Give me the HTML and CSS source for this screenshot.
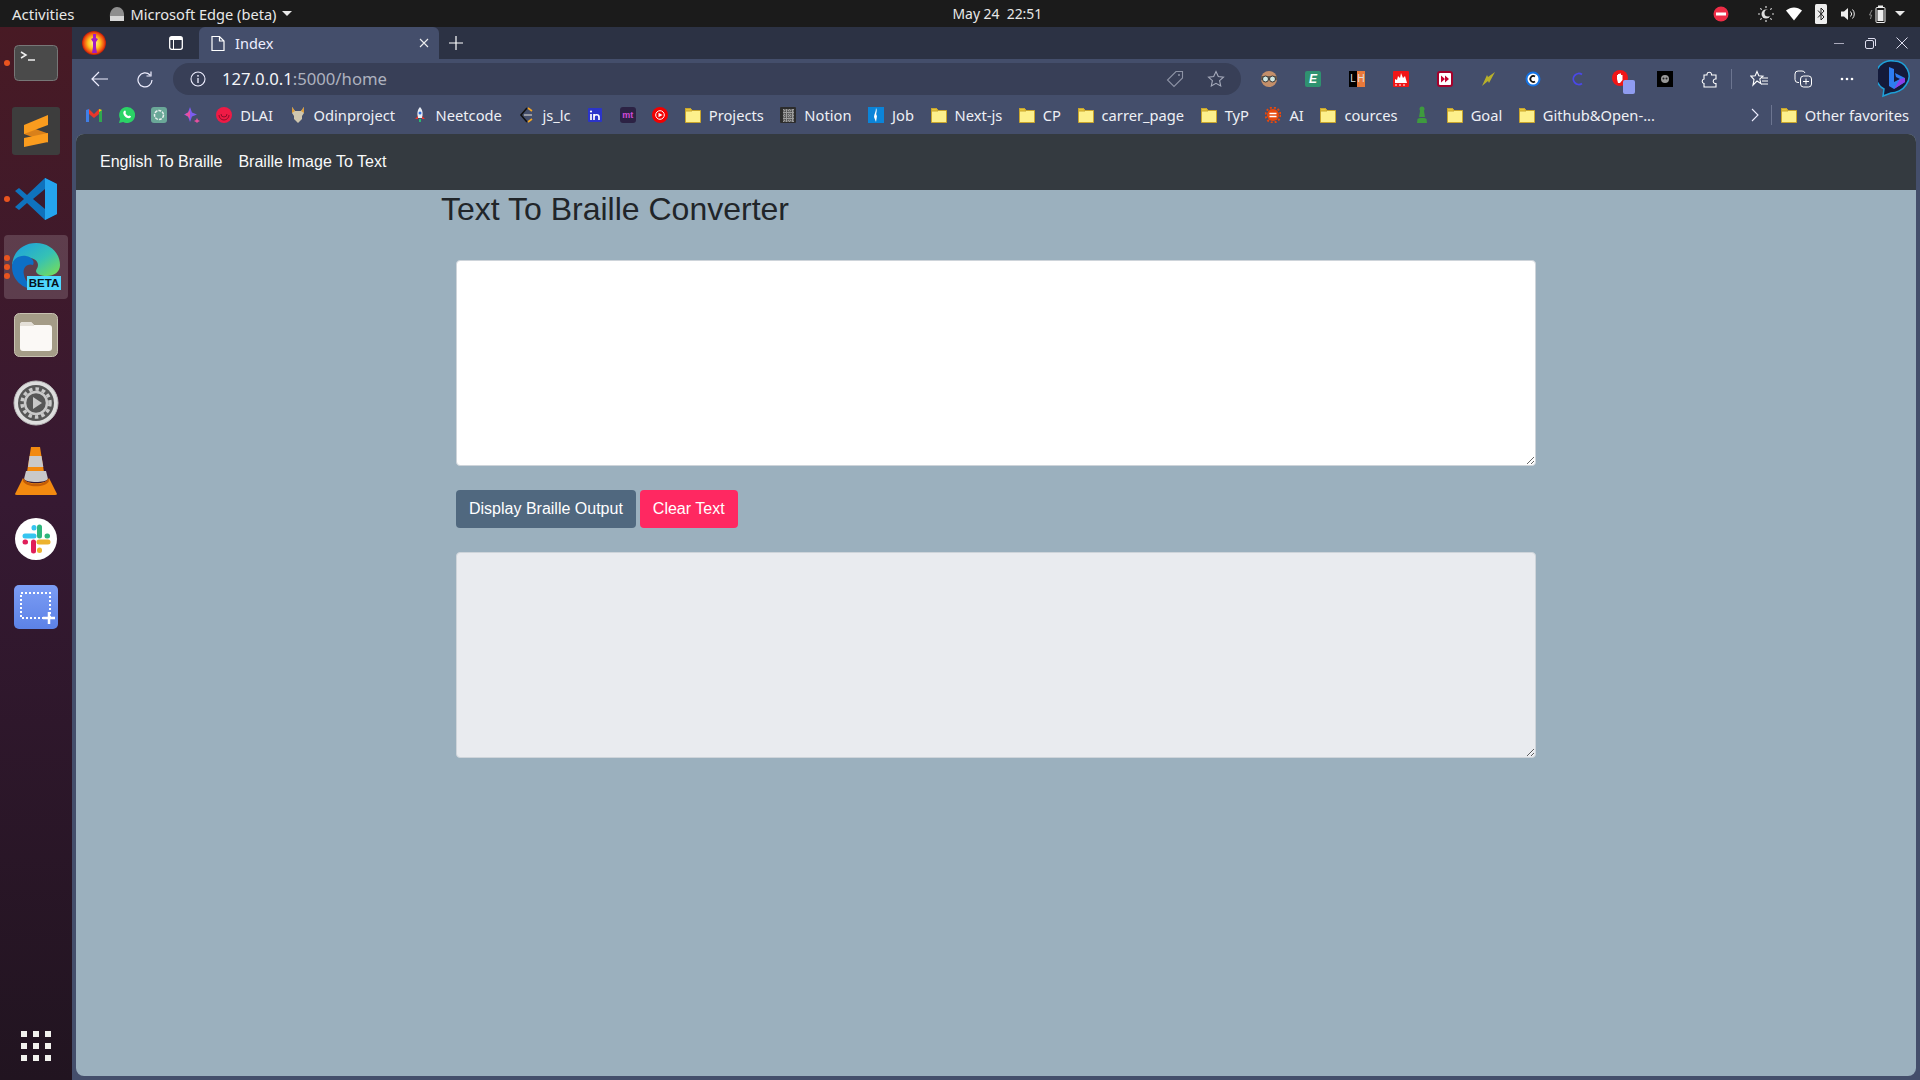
FILE: index.html
```html
<!DOCTYPE html>
<html lang="en">
  <head>
    <meta charset="utf-8" />
    <title>Index</title>
    <link rel="stylesheet" href="styles.css">
  </head>
  <body>
    <svg class="defs" width="0" height="0">
      <defs>
        <symbol id="folder" viewBox="0 0 16 16">
          <path d="M.5 1.5h5l2 2h8v12H.5z" fill="#fdf08c" stroke="#c9a52c"/>
          <path d="M.5 1.5h5l1.500 2.500H.5z" fill="#e7c63a" stroke="#c9a52c"/>
        </symbol>
        <linearGradient id="edge-top" x1="0" y1="0" x2="1" y2="1">
          <stop offset="0" stop-color="#1b9de2"/>
          <stop offset=".55" stop-color="#35c1b5"/>
          <stop offset="1" stop-color="#7ee04e"/>
        </linearGradient>
        <linearGradient id="dock-shot" x1="0" y1="0" x2="0" y2="1">
          <stop offset="0" stop-color="#7c9df5"/>
          <stop offset="1" stop-color="#5c82e6"/>
        </linearGradient>
        <radialGradient id="profile-glow">
          <stop offset="0" stop-color="#fff3a0"/>
          <stop offset=".5" stop-color="#ffc21f"/>
          <stop offset=".85" stop-color="#ee4a10"/>
          <stop offset="1" stop-color="#b81808"/>
        </radialGradient>
      </defs>
    </svg>

    <header class="topbar">
      <span class="activities">Activities</span>
      <span class="app-menu">
        <svg width="16" height="16" viewBox="0 0 16 16"><path d="M1 12C0 5 4 1 8 1s7 3 7 8v3z" fill="#8e8e8e"/><rect x="1" y="10" width="14" height="5" fill="#d6d6d6"/></svg>
        Microsoft Edge (beta)
        <i class="caret"></i>
      </span>
      <span class="clock">May 24&nbsp; 22:51</span>
      <span class="tray">
        <svg class="tray-red" width="16" height="16" viewBox="0 0 16 16"><circle cx="8" cy="8" r="7.500" fill="#ee2c46"/><rect x="3" y="6.500" width="10" height="3" fill="#fff"/></svg>
        <svg class="tray-sun" width="18" height="18" viewBox="0 0 18 18"><circle cx="9" cy="9" r="4.500" fill="#ddd"/><circle cx="11" cy="8" r="3.500" fill="#1b1b1b"/><path d="M9 1v2M9 15v2M1 9h2M15 9h2M3.300 3.300l1.400 1.400M13.300 13.300l1.400 1.400M3.300 14.700l1.400-1.400M13.300 4.700l1.400-1.400" stroke="#ddd" stroke-width="1.200"/></svg>
        <svg width="18" height="14" viewBox="0 0 18 14"><path d="M1 3.500C6-.5 12-.5 17 3.500L9 13.500z" fill="#fff"/></svg>
        <svg class="tray-bt" width="12" height="20" viewBox="0 0 12 20"><rect width="12" height="20" rx="1.500" fill="#eee"/><path d="M3 6.500l6 6.500-3 3V4l3 3-6 6.500" fill="none" stroke="#222"/></svg>
        <svg width="16" height="14" viewBox="0 0 16 14"><path d="M0 4.500h3L7 1v12L3 9.500H0z" fill="#eee"/><path d="M9.500 4.500a3.500 3.500 0 010 5M11.500 2.500a6.500 6.500 0 010 9" stroke="#eee" fill="none"/></svg>
        <svg class="tray-bat" width="20" height="18" viewBox="0 0 20 18"><path d="M3 5L0.500 10h2L1.500 14" stroke="#888" fill="none"/><rect x="7" y="2.500" width="9" height="15" rx="1" fill="none" stroke="#eee"/><rect x="9" y="0.500" width="5" height="2" fill="#eee"/><rect x="8.500" y="5" width="6" height="11" fill="#eee"/></svg>
        <i class="caret"></i>
      </span>
    </header>

    <div class="desktop">
      <nav class="dock">
        <div class="dock-item">
          <i class="run-dot"></i>
          <svg width="44" height="36" viewBox="0 0 44 36"><rect x=".5" y=".5" width="43" height="35" rx="4" fill="#4a4a4a" stroke="#777"/><path d="M7 7l5 3-5 3M14 15h7" fill="none" stroke="#eee" stroke-width="1.500"/></svg>
        </div>
        <div class="dock-item">
          <svg width="48" height="48" viewBox="0 0 48 48"><rect width="48" height="48" rx="3" fill="#3d3d3d"/><path d="M12 18l24 8.500v9L12 27z" fill="#d9801a"/><path d="M36 8v10L12 27v-9z" fill="#fa9c1e"/><path d="M36 26v9L12 40v-9z" fill="#fa9c1e"/></svg>
        </div>
        <div class="dock-item">
          <i class="run-dot"></i>
          <svg width="44" height="44" viewBox="0 0 44 44"><path d="M31 1l12 6v30l-12 6L13 26 5 33l-4-3 9-8-9-8 4-3 8 7z" fill="#0f72bd"/><path d="M31 1l12 6v30l-12 6z" fill="#25a4ee"/><path d="M31 12L19 22l12 10z" fill="#3b1a2e"/></svg>
        </div>
        <div class="dock-item dock-active">
          <i class="run-dot dot-a"></i><i class="run-dot"></i><i class="run-dot dot-c"></i>
          <svg width="50" height="50" viewBox="0 0 50 50">
            <path d="M1 25C1 10 12 1 25 1c14 0 24 10 24 22 0 7-6 11-13 11-6 0-11-2-11-5 0-2 2-3 2-6 0-5-6-8-12-7C8 17 1 19 1 25z" fill="url(#edge-top)"/>
            <path d="M1 25c0-9 8-12 14-11 6 1 9 5 7 9-5-2-11 2-9 10 1 6 6 10 12 12 3 1 4 2 6 2C14 50 1 39 1 25z" fill="#0d6fc6"/>
            <rect x="16" y="34" width="34" height="14" fill="#4fd8ff"/>
            <text x="33" y="45" class="beta">BETA</text>
          </svg>
        </div>
        <div class="dock-item">
          <svg width="44" height="44" viewBox="0 0 44 44"><rect x=".5" y=".5" width="43" height="43" rx="5" fill="#a49c87" stroke="#c8c2b2"/><path d="M6 12a3 3 0 013-3h8l3 3h15a3 3 0 013 3v20a3 3 0 01-3 3H9a3 3 0 01-3-3z" fill="#fbf9f6"/><path d="M6 12a3 3 0 013-3h8l3 3v1H6z" fill="#e4e0d8"/></svg>
        </div>
        <div class="dock-item">
          <svg width="46" height="46" viewBox="0 0 46 46"><circle cx="23" cy="23" r="22" fill="#dedede" stroke="#bbb"/><circle cx="23" cy="23" r="18" fill="#575757"/><circle cx="23" cy="23" r="14" fill="none" stroke="#c9c9c9" stroke-width="3.500" stroke-dasharray="3.500 3"/><circle cx="23" cy="23" r="11" fill="none" stroke="#c9c9c9" stroke-width="2.500"/><path d="M20 17l9 6-9 6z" fill="#c9c9c9"/></svg>
        </div>
        <div class="dock-item">
          <svg width="42" height="48" viewBox="0 0 42 48"><path d="M16 0h9l4 25H12z" fill="#f28a10"/><path d="M14.500 9h12l1.800 11H13z" fill="#c9c9c9"/><path d="M11 24h20l2 8c-2 4-22 4-24 0z" fill="#c9c9c9"/><path d="M8 31l-8 16q0 1 2 1h38q2 0 2-1l-8-16c-2 7-24 7-26 0z" fill="#f28a10"/><path d="M9 31c2 8 22 8 24 0l1 3c-3 7-23 7-26 0z" fill="#c25c06"/></svg>
        </div>
        <div class="dock-item">
          <svg width="42" height="42" viewBox="0 0 42 42"><circle cx="21" cy="21" r="21" fill="#fff"/><g fill="none" stroke-linecap="round" stroke-width="5"><path d="M10 18h9" stroke="#36c5f0"/><path d="M19 9.500v.5" stroke="#36c5f0"/><path d="M24.500 9v9" stroke="#2eb67d"/><path d="M32 18h.500" stroke="#2eb67d"/><path d="M24 24h9" stroke="#ecb22e"/><path d="M24.500 32v.500" stroke="#ecb22e"/><path d="M18.500 24v9" stroke="#e01e5a"/><path d="M10 24h.500" stroke="#e01e5a"/></g></svg>
        </div>
        <div class="dock-item">
          <svg width="44" height="44" viewBox="0 0 44 44"><rect width="44" height="44" rx="5" fill="url(#dock-shot)"/><rect x="7" y="8" width="29" height="25" fill="none" stroke="#fff" stroke-width="2" stroke-dasharray="2 2"/><path d="M35 27v12M29 33h12" stroke="#fff" stroke-width="2.500"/></svg>
        </div>
        <div class="dock-apps">
          <svg width="30" height="30" viewBox="0 0 30 30" fill="#f2f2ee"><rect width="6" height="6"/><rect x="12" width="6" height="6"/><rect x="24" width="6" height="6"/><rect y="12" width="6" height="6"/><rect x="12" y="12" width="6" height="6"/><rect x="24" y="12" width="6" height="6"/><rect y="24" width="6" height="6"/><rect x="12" y="24" width="6" height="6"/><rect x="24" y="24" width="6" height="6"/></svg>
        </div>
      </nav>

      <div class="browser">
        <div class="tabstrip">
          <span class="profile">
            <svg width="24" height="24" viewBox="0 0 24 24"><circle cx="12" cy="12" r="12" fill="url(#profile-glow)"/><path d="M11 3h3v4l2 1-2 3v5l1 6h-5l1-6v-5L9 8l2-1z" fill="#a11bc4"/></svg>
          </span>
          <span class="tab-actions">
            <svg width="14" height="14" viewBox="0 0 14 14"><rect x=".7" y=".7" width="12.600" height="12.600" rx="2" fill="none" stroke="#fff" stroke-width="1.300"/><rect x="1" y="1" width="12" height="3" fill="#fff"/><path d="M4.500 4v9" stroke="#fff"/></svg>
          </span>
          <div class="tab">
            <svg width="14" height="17" viewBox="0 0 14 17"><path d="M1 1.500h7.500l4.500 4.500v9.500H1zM8.500 1.500V6H13" fill="none" stroke="#fff" stroke-width="1.200"/></svg>
            <span class="tab-title">Index</span>
            <svg class="tab-close" width="10" height="10" viewBox="0 0 10 10"><path d="M1 1l8 8M9 1l-8 8" stroke="#eee" stroke-width="1.100"/></svg>
          </div>
          <span class="new-tab">
            <svg width="14" height="14" viewBox="0 0 14 14"><path d="M7 0v14M0 7h14" stroke="#fff" stroke-width="1.200"/></svg>
          </span>
          <span class="win-controls">
            <svg width="11" height="11" viewBox="0 0 11 11"><path d="M0 5.500h10" stroke="#aab"/></svg>
            <svg width="11" height="11" viewBox="0 0 11 11"><rect x=".5" y="2.500" width="8" height="8" rx="1.500" fill="none" stroke="#dde"/><path d="M3 .5h6a1.500 1.500 0 011.500 1.500v6" fill="none" stroke="#dde"/></svg>
            <svg width="12" height="12" viewBox="0 0 12 12"><path d="M.5.500l11 11M11.500.500l-11 11" stroke="#dde"/></svg>
          </span>
        </div>

        <div class="toolbar">
          <span class="tool">
            <svg width="18" height="16" viewBox="0 0 18 16"><path d="M17 8H1M8 1L1 8l7 7" fill="none" stroke="#eef" stroke-width="1.200"/></svg>
          </span>
          <span class="tool">
            <svg width="17" height="17" viewBox="0 0 17 17"><path d="M14 4a7 7 0 10 2 5M15 .5V5h-4.500" fill="none" stroke="#eef" stroke-width="1.200"/></svg>
          </span>
          <div class="addressbar">
            <svg width="16" height="16" viewBox="0 0 16 16"><circle cx="8" cy="8" r="7" fill="none" stroke="#eef" stroke-width="1.100"/><path d="M8 7v5" stroke="#eef" stroke-width="1.300"/><circle cx="8" cy="4.800" r=".9" fill="#eef"/></svg>
            <span class="url"><b>127.0.0.1</b>:5000/home</span>
            <span class="addr-icons">
              <svg width="18" height="18" viewBox="0 0 18 18"><path d="M10 1.500h6.500V8L8 16.500 1.500 10z" fill="none" stroke="#8d93a5" stroke-width="1.100"/><circle cx="13" cy="5" r="1" fill="#8d93a5"/></svg>
              <svg width="18" height="18" viewBox="0 0 18 18"><path d="M9 1.500l2.300 5 5.200.6-3.900 3.500 1.100 5.400L9 13.300 4.300 16l1.100-5.400L1.500 7.100l5.200-.6z" fill="none" stroke="#a5aabb" stroke-width="1.100"/></svg>
            </span>
          </div>
          <span class="ext-group">
            <span class="tool">
              <svg width="16" height="18" viewBox="0 0 16 18"><circle cx="8" cy="9" r="8" fill="#c48f6a"/><rect y="6" width="16" height="4" fill="#6b5a4a"/><circle cx="4.500" cy="9" r="3" fill="#cfe8e4" stroke="#333"/><circle cx="11.500" cy="9" r="3" fill="#cfe8e4" stroke="#333"/></svg>
            </span>
            <span class="tool"><span class="ext-e">E</span></span>
            <span class="tool"><span class="ext-lh"><i>L</i><i>H</i></span></span>
            <span class="tool">
              <svg width="16" height="16" viewBox="0 0 16 16"><rect width="16" height="16" rx="1" fill="#f01616"/><path d="M2 12V8l2 1 1-4 2 2 1-5 2 5 2-2 2 7z" fill="#fff"/><path d="M2 14h2M6 14h2M10 14h2" stroke="#fff"/></svg>
            </span>
            <span class="tool">
              <svg width="16" height="16" viewBox="0 0 16 16"><rect width="16" height="16" rx="3" fill="#a5002b"/><rect x="2" y="2" width="12" height="12" rx="1" fill="#fff"/><path d="M4 4.500L8 8l-4 3.500zM8 4.500L12 8l-4 3.500z" fill="#c4002f"/></svg>
            </span>
            <span class="tool">
              <svg width="16" height="16" viewBox="0 0 16 16"><path d="M14 1L7 6 6 4 1 15l6-5 1 2z" fill="#b8b02a"/></svg>
            </span>
            <span class="tool">
              <svg width="16" height="16" viewBox="0 0 16 16"><circle cx="8" cy="8" r="7.500" fill="#1273e6"/><circle cx="8" cy="8" r="5.500" fill="#fff"/><path d="M10 5.500a3 3 0 100 5" fill="none" stroke="#111" stroke-width="1.800"/></svg>
            </span>
            <span class="tool">
              <svg width="12" height="16" viewBox="0 0 12 16"><path d="M11 3.500a5.500 5.500 0 100 9" fill="none" stroke="#4a48e8" stroke-width="1.800"/></svg>
            </span>
            <span class="tool ext-block">
              <svg width="18" height="18" viewBox="0 0 18 18"><circle cx="8" cy="8" r="8" fill="#f01616"/><path d="M5 9V5h1v3-4h1.500v4-4.500H9V8 5h1.500v5L8 13H6z" fill="#fff"/></svg>
              <i class="ext-badge"></i>
            </span>
            <span class="tool">
              <svg width="16" height="16" viewBox="0 0 16 16"><rect width="16" height="16" fill="#000"/><circle cx="8" cy="8" r="4" fill="#999"/><circle cx="6.500" cy="7.500" r="1" fill="#222"/><circle cx="9.500" cy="7.500" r="1" fill="#222"/></svg>
            </span>
            <span class="tool">
              <svg width="17" height="17" viewBox="0 0 17 17"><path d="M6 3a2.300 2.300 0 014.500 0v1H15v4h-1a2.300 2.300 0 000 4.500h1V16H3v-3.500a2.300 2.300 0 010-4.500V4h3z" fill="none" stroke="#fff" stroke-width="1.100"/></svg>
            </span>
          </span>
          <i class="tool-sep"></i>
          <span class="tool">
            <svg width="18" height="18" viewBox="0 0 18 18"><path d="M7 1.500l1.800 4.200 4.200.4-3.200 2.900 1 4.500L7 11 3 15l1-5.500L.8 6.100l4.400-.4z" fill="none" stroke="#fff" stroke-width="1.100"/><path d="M12 8h6M12 11h6M11 14h7" stroke="#fff"/></svg>
          </span>
          <span class="tool">
            <svg width="18" height="18" viewBox="0 0 18 18"><path d="M5 12.500H4a3 3 0 01-3-3V4a3 3 0 013-3h4a3 3 0 013 2" fill="none" stroke="#fff"/><rect x="6.500" y="6" width="11" height="11" rx="3" fill="none" stroke="#fff"/><path d="M12 8.500v6M9 11.500h6" stroke="#fff"/></svg>
          </span>
          <span class="tool">
            <svg width="14" height="4" viewBox="0 0 14 4" fill="#fff"><circle cx="2" cy="2" r="1.300"/><circle cx="7" cy="2" r="1.300"/><circle cx="12" cy="2" r="1.300"/></svg>
          </span>
          <span class="bing">
            <svg width="32" height="38" viewBox="0 0 32 38"><path d="M16 1a15 15 0 0112 24c-3 5-10 8-15 8l-8 3 1-7A15 15 0 0116 1z" fill="#141a3a" stroke="#1ea0d8" stroke-width="1.500"/><path d="M11 7l5 2v13l6-3-4-2-1-4 10 5v4l-11 7-5-3z" fill="#2d7cf0"/><path d="M22 19l5-1v4l-11 7z" fill="#8b3fe8"/></svg>
          </span>
        </div>

        <div class="bookmarks">
          <span class="bm icon-only">
            <svg width="16" height="14" viewBox="0 0 16 14"><path d="M0 14V2l3-1v13z" fill="#3f7ee8"/><path d="M13 14V1l3 1v12z" fill="#2fa84f"/><path d="M3 1l5 5 5-5v5L8 10 3 6z" fill="#e8372c"/><path d="M13 1l3 1-3 2z" fill="#f5bb12"/></svg>
          </span>
          <span class="bm icon-only">
            <svg width="16" height="16" viewBox="0 0 16 16"><path d="M8 0a8 8 0 11-3.800 15L0 16l1.100-4.100A8 8 0 018 0z" fill="#2bd366"/><path d="M5 4c1-1 1.500-.5 2 1l-.5 1c.5 1.300 1.500 2.200 3 3l1-.6c1.500.5 2 1 1 2-1.500 1.500-4 .5-5.500-1S3.500 5.500 5 4z" fill="#fff"/></svg>
          </span>
          <span class="bm icon-only">
            <svg width="16" height="16" viewBox="0 0 16 16"><rect width="16" height="16" rx="3" fill="#6aa898"/><circle cx="8" cy="8" r="4.500" fill="none" stroke="#e8f0ee" stroke-width="1.500" stroke-dasharray="3 1"/></svg>
          </span>
          <span class="bm icon-only">
            <svg width="16" height="16" viewBox="0 0 16 16"><path d="M6 0l2 5.500L13 7.500 8 9.500 6 15 4 9.500 0 7.500l4-2z" fill="#7c5cf0"/><path d="M6 3v9l-2-2.500L1 7.500l3-2z" fill="#e84fa0"/><path d="M13 11l1 2 2 1-2 1-1 1-1-1-2-1 2-1z" fill="#e84fa0"/></svg>
          </span>
          <span class="bm">
            <svg width="16" height="16" viewBox="0 0 16 16"><circle cx="8" cy="8" r="8" fill="#ef1a45"/><path d="M3 8a5 5 0 0010 0M5 7a3 3 0 006 0" fill="none" stroke="#8f0c2a"/></svg>
            DLAI
          </span>
          <span class="bm">
            <svg width="16" height="16" viewBox="0 0 16 16"><path d="M2 0l3 4h6l3-4v6l-2 3v3l-4 4-4-4V9L2 6z" fill="#cfc6ae"/><path d="M2 0l3 4-3 2zM14 0l-3 4 3 2z" fill="#d99b3a"/></svg>
            Odinproject
          </span>
          <span class="bm">
            <svg width="16" height="16" viewBox="0 0 16 16"><path d="M8 0c3 3 3 7 2 11H6C5 7 5 3 8 0z" fill="#e9edf5"/><circle cx="8" cy="6" r="1.500" fill="#2f6fdc"/><path d="M6 9l-3 3 3 0zM10 9l3 3-3 0z" fill="#e8372c"/><path d="M7 12h2v3H7z" fill="#2bb673"/></svg>
            Neetcode
          </span>
          <span class="bm">
            <svg width="16" height="16" viewBox="0 0 16 16"><path d="M9 1L3 8l6 7" fill="none" stroke="#111" stroke-width="1.600"/><path d="M10 1l4 3M10 15l4-3" stroke="#f5a623" stroke-width="1.600"/><path d="M6 8h8" stroke="#bbb" stroke-width="1.400"/></svg>
            js_lc
          </span>
          <span class="bm icon-only">
            <svg width="14" height="14" viewBox="0 0 14 14"><rect width="14" height="14" rx="1" fill="#2b34c9"/><path d="M3 6v6M6 12V6m0 3c0-3 5-3 5 0v3" fill="none" stroke="#fff" stroke-width="1.700"/><circle cx="3" cy="3.500" r="1.100" fill="#fff"/></svg>
          </span>
          <span class="bm icon-only">
            <span class="fav-mt">mt</span>
          </span>
          <span class="bm icon-only">
            <svg width="16" height="16" viewBox="0 0 16 16"><circle cx="8" cy="8" r="8" fill="#f30000"/><circle cx="8" cy="8" r="4.300" fill="none" stroke="#fff"/><path d="M6.500 5.800L10.500 8l-4 2.200z" fill="#fff"/></svg>
          </span>
          <span class="bm"><svg class="folder" width="16" height="16"><use href="#folder"/></svg>Projects</span>
          <span class="bm">
            <svg width="16" height="16" viewBox="0 0 16 16"><rect width="16" height="16" rx="1" fill="#2c2c2c"/><path d="M3 2h11v13H3z" fill="#ccc" opacity=".7"/><path d="M3 4h11M3 7h11M3 10h11M3 13h11M5 2v13M8 2v13M11 2v13" stroke="#333" stroke-dasharray="1 1"/></svg>
            Notion
          </span>
          <span class="bm">
            <svg width="16" height="16" viewBox="0 0 16 16"><rect width="16" height="16" fill="#0b84d8"/><path d="M8 1c2 4-1 5 1 8l-1 6-2-5c0-3 2-5 2-9z" fill="#fff"/></svg>
            Job
          </span>
          <span class="bm"><svg class="folder" width="16" height="16"><use href="#folder"/></svg>Next-js</span>
          <span class="bm"><svg class="folder" width="16" height="16"><use href="#folder"/></svg>CP</span>
          <span class="bm"><svg class="folder" width="16" height="16"><use href="#folder"/></svg>carrer_page</span>
          <span class="bm"><svg class="folder" width="16" height="16"><use href="#folder"/></svg>TyP</span>
          <span class="bm">
            <svg width="16" height="16" viewBox="0 0 16 16"><circle cx="8" cy="8" r="6" fill="#e8480c"/><circle cx="8" cy="8" r="7.500" fill="none" stroke="#e8480c" stroke-width="2" stroke-dasharray="2 2"/><path d="M4.500 6.500h7M4.500 9.500h7" stroke="#fff" stroke-width="1.300"/></svg>
            AI
          </span>
          <span class="bm"><svg class="folder" width="16" height="16"><use href="#folder"/></svg>cources</span>
          <span class="bm icon-only">
            <svg width="16" height="18" viewBox="0 0 16 18"><circle cx="8" cy="3" r="2.500" fill="#3e9a3e"/><path d="M6 5h4l1 6H5zM3.500 13c0-1.500 9-1.500 9 0l.5 4H3z" fill="#3e9a3e"/></svg>
          </span>
          <span class="bm"><svg class="folder" width="16" height="16"><use href="#folder"/></svg>Goal</span>
          <span class="bm"><svg class="folder" width="16" height="16"><use href="#folder"/></svg>Github&amp;Open-...</span>
          <span class="bm-end">
            <svg width="8" height="14" viewBox="0 0 8 14"><path d="M1 1l6 6-6 6" fill="none" stroke="#eef" stroke-width="1.100"/></svg>
            <i class="bm-sep"></i>
            <span class="bm"><svg class="folder" width="16" height="16"><use href="#folder"/></svg>Other favorites</span>
          </span>
        </div>

        <main class="page">
          <div class="navbar">
            <a class="nav-link">English To Braille</a>
            <a class="nav-link">Braille Image To Text</a>
          </div>
          <div class="container">
            <h1>Text To Braille Converter</h1>
            <form class="converter">
              <textarea class="box" rows="8"></textarea>
              <div class="buttons">
                <button type="button" class="btn btn-show">Display Braille Output</button>
                <button type="button" class="btn btn-clear">Clear Text</button>
              </div>
              <textarea class="box" rows="8" disabled></textarea>
            </form>
          </div>
        </main>
      </div>
    </div>
  </body>
</html>
```

FILE: styles.css
```css
html {
  font-family: "Liberation Sans", Arial, sans-serif;
  font-size: 16px;
}

body {
  margin: 0;
  width: 1920px;
  height: 1080px;
  overflow: hidden;
  display: flex;
  flex-direction: column;
  background-color: #444e6b;
}

.defs {
  position: absolute;
}

svg {
  display: block;
  flex: none;
}

.beta {
  font-family: "Liberation Sans", sans-serif;
  font-size: 11.500px;
  font-weight: bold;
  text-anchor: middle;
  fill: #06121c;
}

/* gnome top bar */
.topbar {
  height: 27px;
  flex: none;
  display: flex;
  align-items: center;
  padding: 0 15px 0 12px;
  background-color: #1b1b1b;
  color: #e8e8e8;
  font-family: "Noto Sans", sans-serif;
  font-size: 14.600px;
}

.activities {
  margin-right: 34px;
  font-size: 15px;
}

.app-menu {
  display: flex;
  align-items: center;
  gap: 6px;
}

.caret {
  display: block;
  width: 0;
  height: 0;
  border-left: 5px solid transparent;
  border-right: 5px solid transparent;
  border-top: 5px solid #e8e8e8;
}

.app-menu .caret {
  margin-left: 0;
}

.clock {
  margin-left: 660px;
  font-size: 13.900px;
}

.tray {
  margin-left: auto;
  display: flex;
  align-items: center;
  gap: 12px;
}

.tray-red {
  margin-right: 16px;
}

.tray-sun {
  margin-right: -2px;
}

.tray-bt {
  margin-right: 2px;
}

.tray-bat {
  margin-right: -6px;
}

/* dock */
.desktop {
  flex: 1;
  display: flex;
  min-height: 0;
}

.dock {
  width: 72px;
  flex: none;
  display: flex;
  flex-direction: column;
  align-items: center;
  padding: 2px 0 19px;
  box-sizing: border-box;
  background: linear-gradient(#481a24, #361932 45%, #211420);
}

.dock-item {
  position: relative;
  width: 64px;
  height: 64px;
  margin: 2px 0;
  display: flex;
  align-items: center;
  justify-content: center;
  border-radius: 4px;
}

.dock-active {
  background-color: rgba(255, 255, 255, 0.16);
}

.run-dot {
  position: absolute;
  left: 0;
  top: 29px;
  width: 6px;
  height: 6px;
  border-radius: 50%;
  background-color: #e9541f;
}

.dot-a {
  top: 20px;
}

.dot-c {
  top: 38px;
}

.dock-apps {
  margin-top: auto;
}

/* browser chrome */
.browser {
  flex: 1;
  min-width: 0;
  display: flex;
  flex-direction: column;
}

.tabstrip {
  height: 32px;
  flex: none;
  display: flex;
  align-items: center;
  background-color: #2c3244;
}

.profile {
  width: 44px;
  display: flex;
  justify-content: center;
}

.tab-actions {
  width: 14px;
  margin-left: 53px;
  margin-right: 16px;
}

.tab {
  width: 240px;
  height: 32px;
  box-sizing: border-box;
  display: flex;
  align-items: center;
  padding: 0 10px 0 12px;
  border-radius: 6px 6px 0 0;
  background-color: #444e6b;
  color: #eef;
  font-family: "Noto Sans", sans-serif;
  font-size: 14.500px;
}

.tab-title {
  margin-left: 10px;
}

.tab-close {
  margin-left: auto;
}

.new-tab {
  margin-left: 10px;
}

.win-controls {
  margin-left: auto;
  display: flex;
  align-items: center;
  gap: 20px;
  padding-right: 12px;
}

.toolbar {
  height: 32px;
  padding: 4px 0 0 6px;
  flex: none;
  display: flex;
  align-items: center;
  background-color: #444e6b;
}

.tool {
  position: relative;
  width: 44px;
  height: 32px;
  flex: none;
  display: flex;
  align-items: center;
  justify-content: center;
}

.addressbar {
  width: 1068px;
  height: 32px;
  margin-left: 7px;
  flex: none;
  box-sizing: border-box;
  display: flex;
  align-items: center;
  padding: 0 16px 0 17px;
  border-radius: 16px;
  background-color: #383f57;
  font-family: "Noto Sans", sans-serif;
  font-size: 16.700px;
  color: #aeb2bf;
}

.url {
  margin-left: 16px;
  margin-bottom: 2px;
}

.url b {
  font-weight: 400;
  color: #f4f5f8;
}

.addr-icons {
  margin-left: auto;
  display: flex;
  gap: 23px;
}

.ext-group {
  display: flex;
  margin-left: 6px;
}

.ext-e {
  width: 16px;
  height: 16px;
  border-radius: 2px;
  background-color: #2f9270;
  color: #fff;
  font: italic bold 12px/16px "Liberation Sans", sans-serif;
  text-align: center;
}

.ext-lh {
  display: flex;
  width: 16px;
  height: 16px;
  font: 10px/16px "Liberation Sans", sans-serif;
  text-align: center;
}

.ext-lh i {
  flex: 1;
  font-style: normal;
  background-color: #000;
  color: #ddd;
}

.ext-lh i + i {
  background-color: #e9793a;
}

.ext-badge {
  position: absolute;
  left: 24px;
  top: 17px;
  width: 12px;
  height: 14px;
  border-radius: 2px;
  background-color: #8f9cf0;
}

.tool-sep {
  width: 1px;
  height: 20px;
  margin-right: 5px;
  background-color: #6c7590;
  flex: none;
}

.bing {
  margin-left: 9px;
}

.bookmarks {
  height: 39px;
  flex: none;
  display: flex;
  align-items: center;
  gap: 16.550px;
  padding-left: 14px;
  padding-right: 11px;
  font-family: "Noto Sans", sans-serif;
  font-size: 14.700px;
  color: #eef0f5;
  white-space: nowrap;
}

.bm {
  display: flex;
  align-items: center;
  gap: 8px;
}

.icon-only {
  width: 16px;
  justify-content: center;
}

.fav-mt {
  width: 16px;
  height: 16px;
  border-radius: 3px;
  background-color: #2c2244;
  color: #d24ad8;
  font: bold 9px/16px "Liberation Sans", sans-serif;
  text-align: center;
}

.bm-end {
  margin-left: auto;
  display: flex;
  align-items: center;
}

.bm-sep {
  width: 1px;
  height: 20px;
  margin: 0 9px 0 12px;
  background-color: #6c7590;
}

/* the page itself */
.page {
  flex: 1;
  min-height: 0;
  margin: 0 4px 4px;
  border-radius: 8px;
  overflow: hidden;
  background-color: #9bb0be;
  color: #212529;
}

.navbar {
  height: 56px;
  box-sizing: border-box;
  display: flex;
  align-items: center;
  gap: 16px;
  padding: 0 24px;
  background-color: #343a40;
}

.nav-link {
  color: #f8f9fa;
}

.container {
  width: 1140px;
  margin: 0 auto;
  padding: 0 15px;
  box-sizing: border-box;
}

h1 {
  margin: 0 0 8px;
  font-size: 32px;
  font-weight: 400;
  line-height: 1.2;
}

.converter {
  padding: 24px 15px 0;
}

.box {
  display: block;
  width: 100%;
  box-sizing: border-box;
  padding: 6px 12px;
  border: 1px solid #ced4da;
  border-radius: 4px;
  background-color: #fff;
  font: 16px/24px "Liberation Sans", sans-serif;
}

.box:disabled {
  background-color: #e9ebef;
}

.buttons {
  display: flex;
  gap: 4px;
  margin: 24px 0;
}

.btn {
  height: 38px;
  padding: 0 12px;
  border: 1px solid transparent;
  border-radius: 4px;
  color: #fff;
  font: 16px/24px "Liberation Sans", sans-serif;
}

.btn-show {
  background-color: #50687f;
}

.btn-clear {
  background-color: #ff2861;
}
```
